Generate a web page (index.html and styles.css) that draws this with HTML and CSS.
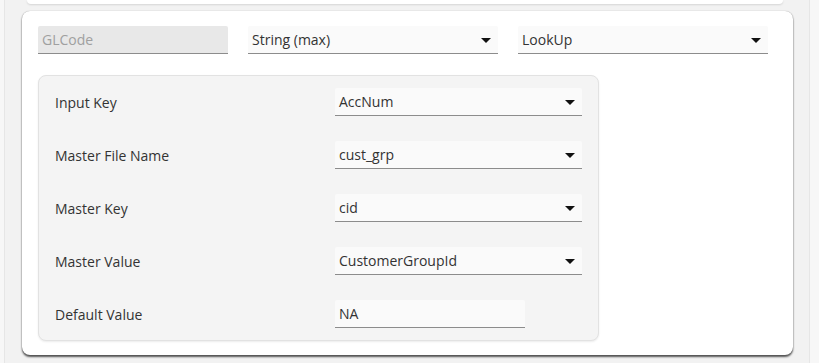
FILE: index.html
```html
<!DOCTYPE html>
<html lang="en">
<head>
  <meta charset="UTF-8" />
  <title>Lookup field</title>
  <link rel="stylesheet" href="styles.css">
</head>
<body>
  <div class="frame">
    <div class="card prev"></div>

    <div class="card main">
      <!-- field header -->
      <div class="top-row">
        <div class="field disabled short">GLCode</div>
        <div class="field select">String (max)<span class="caret"></span></div>
        <div class="field select">LookUp<span class="caret"></span></div>
      </div>

      <!-- lookup settings -->
      <div class="panel">
        <div class="row">
          <span class="label">Input Key</span>
          <div class="field select">AccNum<span class="caret"></span></div>
        </div>
        <div class="row">
          <span class="label">Master File Name</span>
          <div class="field select">cust_grp<span class="caret"></span></div>
        </div>
        <div class="row">
          <span class="label">Master Key</span>
          <div class="field select">cid<span class="caret"></span></div>
        </div>
        <div class="row">
          <span class="label">Master Value</span>
          <div class="field select">CustomerGroupId<span class="caret"></span></div>
        </div>
        <div class="row">
          <span class="label">Default Value</span>
          <div class="field short">NA</div>
        </div>
      </div>
    </div>
  </div>
</body>
</html>
```

FILE: styles.css
```css
body {
  margin: 0;
  background: #f7f7f7;
  font-family: 'Open Sans', 'Noto Sans', sans-serif;
  font-size: 14px;
  color: #333;
}
.frame {
  margin-left: 4px;
  width: 806px;
  height: 363px;
  border-left: 1px solid #e6e6e6;
  border-right: 1px solid #e6e6e6;
  background: #f2f2f2;
  padding: 0 17px;
  box-sizing: border-box;
  overflow: hidden;
}
.card {
  background: #fff;
  border-radius: 8px;
}
.card.prev {
  height: 4px;
  margin: 0 9px 0 5px;
  border-radius: 0 0 8px 8px;
  box-shadow: 0 1px 2px rgba(0, 0, 0, 0.12);
}
.card.main {
  margin-top: 7px;
  width: 771px;
  padding: 15px 16px 14px;
  box-sizing: border-box;
  box-shadow: 0 2px 2px rgba(0, 0, 0, 0.65), 0 0 1px rgba(0, 0, 0, 0.4);
}
.top-row {
  display: flex;
  gap: 20px;
}
.field {
  position: relative;
  width: 250px;
  height: 27px;
  line-height: 27px;
  padding-left: 4px;
  background: #fafafa;
  border-bottom: 1px solid #8c8c8c;
  border-radius: 2px 2px 0 0;
  color: #333;
}
.field.short {
  width: 186px;
}
.field.select {
  width: 246px;
}
.field.disabled {
  background: #e8e8e8;
  color: #a0a0a0;
}
.caret {
  position: absolute;
  right: 7px;
  top: 12px;
  width: 0;
  height: 0;
  border-left: 5px solid transparent;
  border-right: 5px solid transparent;
  border-top: 5px solid #111;
}
.panel {
  margin-top: 21px;
  width: 561px;
  box-sizing: border-box;
  padding: 12px 16px;
  background: #f4f4f4;
  border: 1px solid #e2e2e2;
  border-radius: 8px;
  box-shadow: 0 1px 2px rgba(0, 0, 0, 0.08);
}
.row {
  display: flex;
  align-items: center;
}
.row + .row {
  margin-top: 25px;
}
.label {
  width: 280px;
  flex-shrink: 0;
}
```
